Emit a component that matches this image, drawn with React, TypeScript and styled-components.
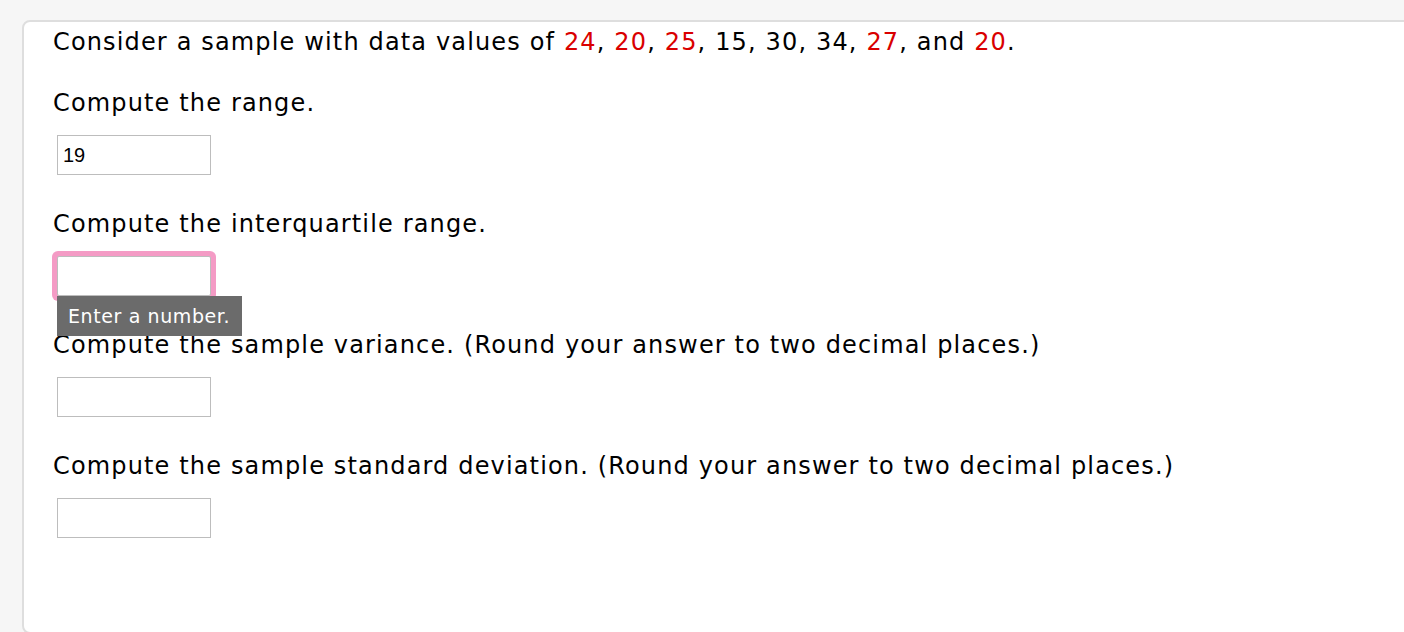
import React from 'react';
import styled, { createGlobalStyle } from 'styled-components';

const GlobalStyle = createGlobalStyle`
  html, body {
    margin: 0;
    padding: 0;
    background: #f6f6f6;
    overflow: hidden;
  }
`;

const Page = styled.div`
  padding: 20px 0 0 22px;
  height: 632px;
  box-sizing: border-box;
  overflow: hidden;
`;

const Card = styled.div`
  width: 1420px;
  height: 614px;
  box-sizing: border-box;
  background: #ffffff;
  border: 2px solid #dedede;
  border-radius: 8px;
  padding: 4px 0 0 29px;
  font-family: Verdana, 'DejaVu Sans', sans-serif;
  font-size: 24px;
  letter-spacing: 1.15px;
  color: #000;
`;

const Question = styled.p`
  margin: 0;
  line-height: 32px;
`;

const Prompt = styled.p<{ $gap: number }>`
  margin: ${(p) => p.$gap}px 0 0;
  line-height: 32px;
`;

const Red = styled.span`
  color: #d90000;
`;

const Field = styled.div`
  position: relative;
  margin: 16px 0 0 4px;
  width: 154px;
  height: 40px;
`;

const Input = styled.input<{ $focus?: boolean }>`
  display: block;
  width: 154px;
  height: 40px;
  box-sizing: border-box;
  border: 1px solid #bdbdbd;
  border-radius: ${(p) => (p.$focus ? '2px' : '0')};
  padding: 0 5px;
  font-family: 'Liberation Sans', Arial, sans-serif;
  font-size: 20px;
  letter-spacing: 0;
  color: #000;
  background: #fff;
  outline: none;
  box-shadow: ${(p) => (p.$focus ? '0 0 0 5px #f49bc5' : 'none')};
`;

const Tooltip = styled.div`
  position: absolute;
  left: 0;
  top: 40px;
  z-index: 2;
  background: #6b6b6b;
  color: #fff;
  font-size: 19px;
  letter-spacing: 0.6px;
  line-height: 40px;
  padding: 0 12px 0 11px;
  white-space: nowrap;
`;

const data: { v: number; red: boolean }[] = [
  { v: 24, red: true },
  { v: 20, red: true },
  { v: 25, red: true },
  { v: 15, red: false },
  { v: 30, red: false },
  { v: 34, red: false },
  { v: 27, red: true },
];

export default function App() {
  return (
    <>
      <GlobalStyle />
      <Page>
        <Card>
          <Question>
            Consider a sample with data values of{' '}
            {data.map((d, i) => (
              <React.Fragment key={i}>
                {d.red ? <Red>{d.v}</Red> : d.v},{' '}
              </React.Fragment>
            ))}
            and <Red>20</Red>.
          </Question>

          <Prompt $gap={29}>Compute the range.</Prompt>
          <Field>
            <Input type="text" defaultValue="19" />
          </Field>

          <Prompt $gap={33}>Compute the interquartile range.</Prompt>
          <Field>
            <Input type="text" $focus />
            <Tooltip>Enter a number.</Tooltip>
          </Field>

          <Prompt $gap={33}>
            Compute the sample variance. (Round your answer to two decimal places.)
          </Prompt>
          <Field>
            <Input type="text" />
          </Field>

          <Prompt $gap={33}>
            Compute the sample standard deviation. (Round your answer to two decimal places.)
          </Prompt>
          <Field>
            <Input type="text" />
          </Field>
        </Card>
      </Page>
    </>
  );
}
